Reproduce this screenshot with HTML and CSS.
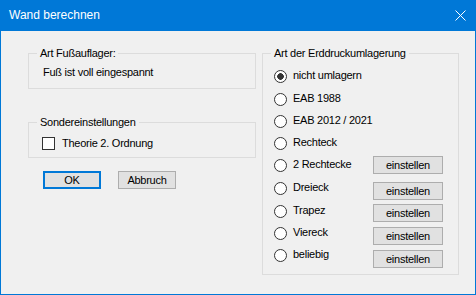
FILE: index.html
```html
<!DOCTYPE html>
<html lang="de">
<head>
<meta charset="utf-8">
<title>Wand berechnen</title>
<link rel="stylesheet" href="styles.css">
</head>
<body>
<div class="window">
  <div class="titlebar">
    <span class="title">Wand berechnen</span>
    <svg class="close" width="11" height="11" viewBox="0 0 11 11" aria-hidden="true">
      <path d="M0.5 0.5 L10.5 10.5 M10.5 0.5 L0.5 10.5" stroke="#fff" stroke-width="1" fill="none"/>
    </svg>
  </div>
  <div class="content">
    <div class="left-col">
      <fieldset class="group">
        <legend>Art Fußauflager:</legend>
        <div class="group-body body-foot">
          <div class="static-text">Fuß ist voll eingespannt</div>
        </div>
      </fieldset>
      <fieldset class="group group-special">
        <legend>Sondereinstellungen</legend>
        <div class="group-body body-special">
          <div class="check-row"><span class="checkbox"></span><span class="opt-label">Theorie 2. Ordnung</span></div>
        </div>
      </fieldset>
      <div class="actions">
        <button class="btn btn-default">OK</button>
        <button class="btn">Abbruch</button>
      </div>
    </div>
    <fieldset class="group group-redist">
      <legend>Art der Erddruckumlagerung</legend>
      <div class="group-body body-redist">
        <div class="option-row tall"><span class="radio checked"></span><span class="opt-label">nicht umlagern</span></div>
        <div class="option-row"><span class="radio"></span><span class="opt-label">EAB 1988</span></div>
        <div class="option-row"><span class="radio"></span><span class="opt-label">EAB 2012 / 2021</span></div>
        <div class="option-row"><span class="radio"></span><span class="opt-label">Rechteck</span></div>
        <div class="option-row tall"><span class="radio"></span><span class="opt-label">2 Rechtecke</span><button class="btn btn-set nudge-1">einstellen</button></div>
        <div class="option-row tall"><span class="radio"></span><span class="opt-label">Dreieck</span><button class="btn btn-set nudge-4">einstellen</button></div>
        <div class="option-row"><span class="radio"></span><span class="opt-label">Trapez</span><button class="btn btn-set nudge-3">einstellen</button></div>
        <div class="option-row"><span class="radio"></span><span class="opt-label">Viereck</span><button class="btn btn-set nudge-4">einstellen</button></div>
        <div class="option-row"><span class="radio"></span><span class="opt-label">beliebig</span><button class="btn btn-set nudge-5">einstellen</button></div>
      </div>
    </fieldset>
  </div>
</div>
</body>
</html>
```

FILE: styles.css
```css
* { box-sizing: border-box; }

html, body {
  margin: 0;
  padding: 0;
  background: #f0f0f0;
}

body {
  font-family: "Liberation Sans", Arial, sans-serif;
  font-size: 11px;
  letter-spacing: -0.25px;
  color: #000;
}

.window {
  width: 476px;
  height: 295px;
  background: #f0f0f0;
  border: 1px solid #0078d7;
  border-top: none;
  display: flex;
  flex-direction: column;
}

.titlebar {
  height: 31px;
  background: #0078d7;
  display: flex;
  align-items: center;
  justify-content: space-between;
  padding: 0 10px 0 8px;
  margin: 0 -1px;
}

.title {
  color: #fff;
  font-size: 12px;
  letter-spacing: 0;
  line-height: 31px;
  padding-left: 1px;
}

.close {
  display: block;
  margin-top: -1px;
}

.content {
  display: flex;
  align-items: flex-start;
  padding: 16px 0 0 27px;
  gap: 6px;
}

.left-col {
  width: 228px;
  display: flex;
  flex-direction: column;
}

.group {
  margin: 0;
  padding: 0;
  border: 1px solid #dcdcdc;
  min-width: 0;
}

.group legend {
  padding: 0 3px;
  margin-left: 8px;
  line-height: 13px;
}

.body-foot {
  padding: 6px 0 9px 14px;
}

.static-text {
  line-height: 13px;
}

.group-special {
  margin-top: 27px;
}

.body-special {
  padding: 8px 0 7px 13px;
}

.check-row {
  display: flex;
  align-items: flex-start;
  height: 13px;
}

.checkbox {
  width: 13px;
  height: 13px;
  border: 1px solid #333;
  background: #fff;
  flex: none;
  margin-right: 7px;
}

.opt-label {
  line-height: 13px;
  white-space: nowrap;
}

.actions {
  display: flex;
  gap: 17px;
  margin-top: 13px;
  padding-left: 15px;
}

.btn {
  font-family: inherit;
  font-size: 11px;
  letter-spacing: -0.25px;
  color: #000;
  background: #e1e1e1;
  border: 1px solid #adadad;
  border-radius: 0;
  width: 58px;
  height: 18px;
  padding: 0;
  margin: 0;
  line-height: 16px;
  text-align: center;
}

.btn-default {
  border: 2px solid #0078d7;
  line-height: 14px;
}

.group-redist {
  width: 197px;
}

.body-redist {
  display: flex;
  flex-direction: column;
  padding: 6px 15px 7px 11px;
}

.option-row {
  height: 22px;
  display: flex;
  align-items: flex-start;
}

.option-row.tall {
  height: 23px;
}

.option-row .radio {
  margin-top: 4px;
}

.option-row .opt-label {
  margin-top: 3px;
}

.radio {
  width: 13px;
  height: 13px;
  border: 1px solid #333;
  border-radius: 50%;
  background: #fff;
  flex: none;
  margin-right: 6px;
}

.radio.checked {
  background: radial-gradient(circle, #333 0, #333 3px, #fff 3.6px);
}

.btn-set {
  width: 70px;
  margin-left: auto;
}

.nudge-1 { margin-top: 1px; }
.nudge-3 { margin-top: 3px; }
.nudge-4 { margin-top: 4px; }
.nudge-5 { margin-top: 5px; }
```
